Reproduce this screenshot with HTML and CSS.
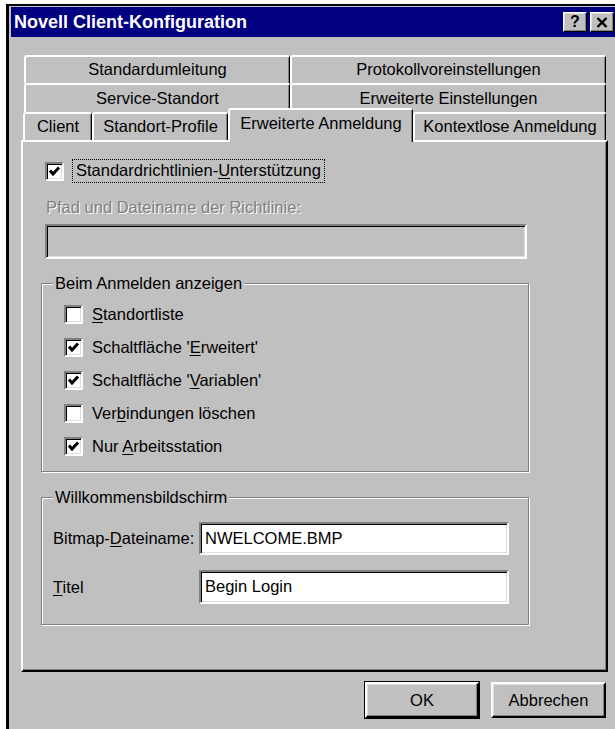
FILE: index.html
```html
<!DOCTYPE html>
<html lang="de">
<head>
<meta charset="utf-8">
<title>Novell Client-Konfiguration</title>
<link rel="stylesheet" href="styles.css">
</head>
<body>
<div class="window">
  <div class="titlebar">
    <span class="title">Novell Client-Konfiguration</span>
    <div class="caption-buttons">
      <span class="cap-btn help">?</span>
      <span class="cap-btn close">
        <svg width="12" height="11" viewBox="0 0 12 11"><path d="M1.5 1 L10.5 10 M10.5 1 L1.5 10" stroke="#000" stroke-width="2.4" fill="none"/></svg>
      </span>
    </div>
  </div>

  <div class="client">
    <div class="tabs">
      <div class="tab-row back">
        <div class="tab w-left">Standardumleitung</div>
        <div class="tab w-right">Protokollvoreinstellungen</div>
      </div>
      <div class="tab-row back second">
        <div class="tab w-left">Service-Standort</div>
        <div class="tab w-right">Erweiterte Einstellungen</div>
      </div>
      <div class="tab-row front">
        <div class="tab t-client">Client</div>
        <div class="tab t-profile">Standort-Profile</div>
        <div class="tab t-adv selected">Erweiterte Anmeldung</div>
        <div class="tab t-ctx">Kontextlose Anmeldung</div>
      </div>
    </div>

    <div class="panel">
      <div class="check-row first">
        <span class="cb checked"><svg width="15" height="15" viewBox="0 0 15 15"><path d="M3 6.5 L6 10 L12 3.5" stroke="#000" stroke-width="3" fill="none"/></svg></span>
        <span class="focus-label">Standardrichtlinien-<u>U</u>nterstützung</span>
      </div>

      <div class="disabled-label">Pfad und Dateiname der Richtlinie:</div>
      <div class="edit disabled"></div>

      <fieldset class="group group-login">
        <legend>Beim Anmelden anzeigen</legend>
        <div class="group-body">
          <div class="check-row">
            <span class="cb"></span>
            <span class="cb-label"><u>S</u>tandortliste</span>
          </div>
          <div class="check-row">
            <span class="cb checked"><svg width="15" height="15" viewBox="0 0 15 15"><path d="M3 6.5 L6 10 L12 3.5" stroke="#000" stroke-width="3" fill="none"/></svg></span>
            <span class="cb-label">Schaltfläche '<u>E</u>rweitert'</span>
          </div>
          <div class="check-row">
            <span class="cb checked"><svg width="15" height="15" viewBox="0 0 15 15"><path d="M3 6.5 L6 10 L12 3.5" stroke="#000" stroke-width="3" fill="none"/></svg></span>
            <span class="cb-label">Schaltfläche '<u>V</u>ariablen'</span>
          </div>
          <div class="check-row">
            <span class="cb"></span>
            <span class="cb-label">Ver<u>b</u>indungen löschen</span>
          </div>
          <div class="check-row">
            <span class="cb checked"><svg width="15" height="15" viewBox="0 0 15 15"><path d="M3 6.5 L6 10 L12 3.5" stroke="#000" stroke-width="3" fill="none"/></svg></span>
            <span class="cb-label">Nur <u>A</u>rbeitsstation</span>
          </div>
        </div>
      </fieldset>

      <fieldset class="group group-welcome">
        <legend>Willkommensbildschirm</legend>
        <div class="group-body">
          <div class="field-row">
            <span class="field-label">Bitmap-<u>D</u>ateiname:</span>
            <span class="edit">NWELCOME.BMP</span>
          </div>
          <div class="field-row second">
            <span class="field-label"><u>T</u>itel</span>
            <span class="edit">Begin Login</span>
          </div>
        </div>
      </fieldset>
    </div>

    <div class="buttons">
      <span class="button default">OK</span>
      <span class="button">Abbrechen</span>
    </div>
  </div>
</div>
</body>
</html>
```

FILE: styles.css
```css
html, body {
  margin: 0;
  padding: 0;
  background: #fff;
  overflow: hidden;
}

body {
  font-family: "Liberation Sans", Arial, sans-serif;
  font-size: 16.5px;
  line-height: 19px;
  color: #000;
}

u {
  text-decoration-thickness: 1px;
  text-underline-offset: 2px;
}

/* dialog frame */
.window {
  margin: 4px 0 0 6px;
  width: 609px;
  height: 725px;
  box-sizing: border-box;
  border-left: 3px solid #000;
  border-top: 2px solid #000;
  padding: 1px 0 0 2px;
  background: #c0c0c0;
}

.titlebar {
  height: 30px;
  background: #000080;
  display: flex;
  align-items: center;
  justify-content: space-between;
  padding-left: 3px;
}

.title {
  color: #fff;
  font-weight: bold;
  font-size: 18px;
}

.caption-buttons {
  display: flex;
  gap: 3px;
  margin-right: 1px;
}

.cap-btn {
  width: 24px;
  height: 20px;
  box-sizing: border-box;
  background: #c0c0c0;
  border: 1px solid;
  border-color: #fff #000 #000 #fff;
  box-shadow: inset -1px -1px #808080, inset 1px 1px #dfdfdf;
  display: flex;
  align-items: center;
  justify-content: center;
  font-weight: bold;
  font-size: 16px;
  line-height: 16px;
}

.client {
  padding: 18px 0 0 10px;
  width: 587px;
}

/* tab strip */
.tab-row {
  display: flex;
}

.tab-row.back {
  height: 28px;
  margin: 0 2px 0 3px;
}

.tab-row.back.second {
  height: 29px;
}

.tab-row.front {
  height: 28px;
  margin: 0 2px 0 2px;
}

.tab {
  box-sizing: border-box;
  height: 100%;
  border-left: 2px solid #fff;
  border-top: 2px solid #fff;
  border-right: 1px solid #000;
  border-radius: 3px 3px 0 0;
  box-shadow: inset -1px 0 #808080;
  display: flex;
  align-items: center;
  justify-content: center;
  padding-bottom: 1px;
  white-space: nowrap;
  background: #c0c0c0;
}

.w-left { width: 266px; }
.w-right { flex: 1; }

.t-client { width: 69px; }
.t-profile { width: 136px; }
.t-adv { width: 185px; }
.t-ctx { flex: 1; }

.tab.selected {
  position: relative;
  z-index: 1;
  height: 34px;
  margin-top: -4px;
  margin-bottom: -2px;
  padding-bottom: 5px;
}

/* page of the selected tab */
.panel {
  height: 532px;
  box-sizing: border-box;
  border: 2px solid;
  border-color: #fff #000 #000 #fff;
  box-shadow: inset -1px -1px #808080;
  padding: 17px 0 0 22px;
}

.check-row {
  display: flex;
  align-items: center;
  height: 33px;
}

.check-row.first {
  height: 24px;
}

.cb {
  width: 19px;
  height: 19px;
  box-sizing: border-box;
  flex: none;
  background: #fff;
  border: 2px solid;
  border-color: #808080 #fff #fff #808080;
  box-shadow: inset 1px 1px #000, inset -1px -1px #dfdfdf;
  display: flex;
  align-items: center;
  justify-content: center;
}

.cb svg {
  display: block;
}

.focus-label {
  margin-left: 8px;
  border: 1px dotted #000;
  padding: 1px 3px 2px 3px;
}

.cb-label {
  margin-left: 9px;
}

.disabled-label {
  margin-top: 15px;
  margin-left: 1px;
  color: #808080;
  text-shadow: 1px 1px 0 #fff;
}

.edit {
  display: block;
  box-sizing: border-box;
  height: 35px;
  width: 482px;
  margin-top: 7px;
  background: #fff;
  border: 2px solid;
  border-color: #808080 #fff #fff #808080;
  box-shadow: inset 1px 1px #000, inset -1px -1px #dfdfdf;
  padding: 6px 4px;
  white-space: nowrap;
}

.edit.disabled {
  background: #c0c0c0;
}

/* group boxes */
.group {
  margin: 15px 0 0 -4px;
  width: 488px;
  box-sizing: border-box;
  padding: 0;
  border: 1px solid #808080;
  box-shadow: inset 1px 1px #fff, 1px 1px #fff;
  min-width: 0;
}

.group legend {
  margin-left: 11px;
  padding: 0 2px;
  background: #c0c0c0;
}

.group-login .group-body {
  padding: 5px 0 8px 22px;
}

.group-welcome {
  margin-top: 16px;
}

.group-welcome .group-body {
  padding: 15px 0 20px 11px;
}

.field-row {
  display: flex;
  align-items: center;
  height: 33px;
}

.field-row.second {
  height: 34px;
  margin-top: 15px;
}

.field-label {
  width: 146px;
  flex: none;
}

.field-row .edit {
  margin: 0;
  width: 310px;
  height: 100%;
  padding: 5px 4px;
}

/* dialog buttons */
.buttons {
  display: flex;
  justify-content: flex-end;
  gap: 12px;
  margin: 10px 2px 0 0;
}

.button {
  width: 115px;
  height: 36px;
  box-sizing: border-box;
  border: 2px solid;
  border-color: #fff #000 #000 #fff;
  box-shadow: inset -1px -1px #808080, inset 1px 1px #dfdfdf;
  display: flex;
  align-items: center;
  justify-content: center;
}

.button.default {
  width: 114px;
  outline: 1px solid #000;
}
```
